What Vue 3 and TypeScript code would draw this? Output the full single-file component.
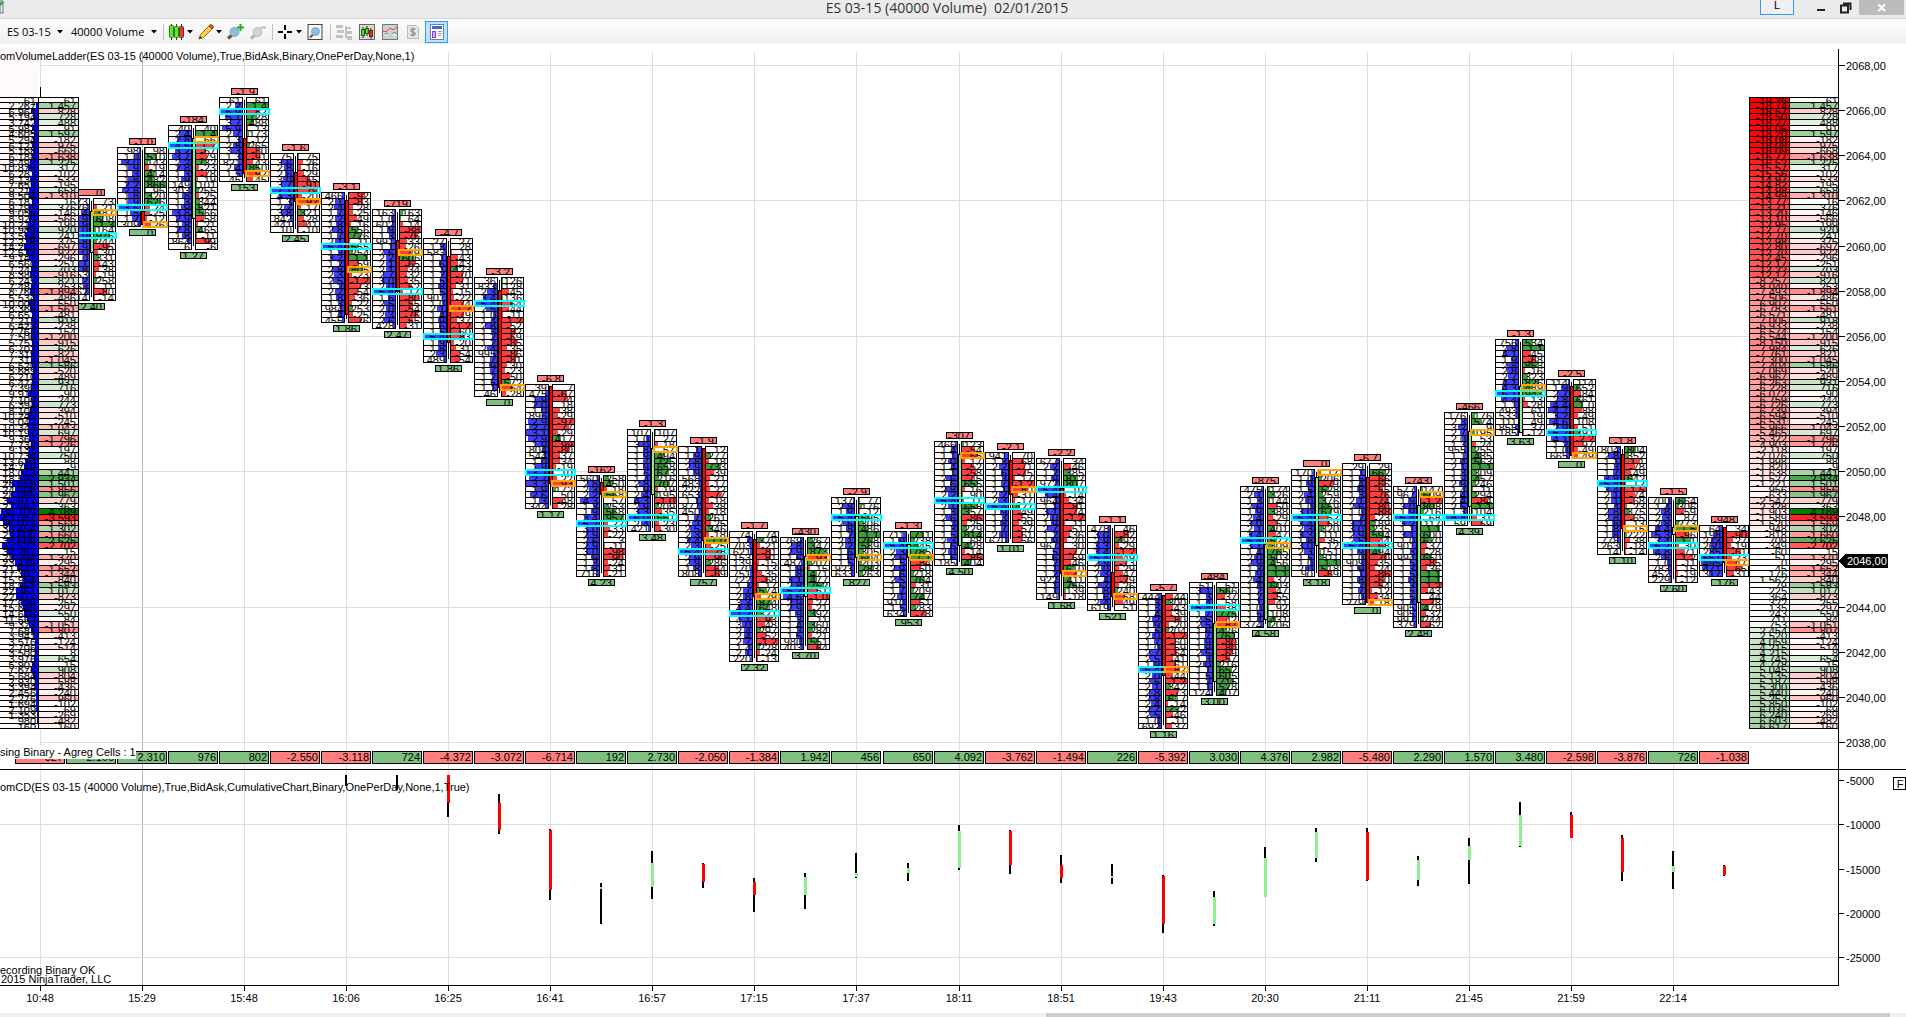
<script setup lang="ts">
import { computed, onBeforeUnmount, onMounted, ref } from 'vue'

interface Bar {
  i: number
  top: number
  end: number
  poc: number
  mark: number
  head: string
  foot: string
  body: [number, number]
  up: boolean
  vols: string[]
  deltas: string[]
}
type Candle = [number, number, number, number, number, number]

const ladderDelta = `61 1.457 -828 728 488 -91 1.597 -182 -975 -668 -1.638 1.225 317 -102 -533 -195 658 -1.310 16 376
-146 -566 -199 920 241 -375 -697 -922 -296 -251 703 -916 821 -253 -1.894 -486 -550 -1.561 -481 918
-238 154 -1.200 -915 626 -821 -1.045 1.586 -520 -489 931 716 -90 -244 773 -394 -510 -245 -1.043 697
-1.796 -1.726 197 750 88 -9 1.441 2.934 1.501 -1.856 1.967 -779 363 4.189 -3.593 -1.569 1.302 -1.660 2.625 -2.702
15 -1.370 -295 -1.652 -1.344 -840 1.583 1.017 -873 255 -297 550 84 -1.051 -1.807 -413 -124 -514 8 654
15 908 -804 -588 -436 -240 -960 -102 69 -269 -482 -160`.split(/\s+/)

const ladderCumulative = `-19.36 -18.74 -18.57 -18.50 -18.27 -18.05 -18.20 -18.08 -18.08 -18.09 -16.77 -16.52 -15.57 -15.56 -14.97 -14.82
-14.98 -14.99 -13.77 -13.71 -13.20 -13.10 -12.95 -12.77 -12.70 -12.98 -12.80 -12.70 -12.45 -12.17 -12.22 -12.17
-8.257 -8.040 -7.493 -7.506 -6.907 -6.783 -6.571 -7.005 -6.933 -6.574 -6.544 -8.150 -7.984 -7.761 -7.300 -7.404 -7.069 -6.967 -6.263 -6.228
-6.072 -6.759 -6.726 -6.739 -6.594 -6.531 -5.966 -5.465 -5.322 -4.903 -2.118 -2.076 -1.998 -1.820 -1.638 -1.527 -1.221 -956 -633 -2.547
-2.328 -1.903 -1.589 -1.520 -948 -818 -709 -349 -60 -51 0 45 176 1.562 79 225 364 322 135 243
711 753 2.454 2.520 4.059 4.215 4.215 4.745 4.778 5.045 5.135 5.187 5.300 5.440 5.253 5.850 6.036 6.240 6.603 6.617`.split(/\s+/)

const ladderVolume = `61 2.267 6.964 5.194 3.742 5.983 4.605 5.294 6.122 5.188 6.188 8.492 10.875 6.283 8.137 7.659 9.217 9.504 6.181 9.791
9.056 8.920 10.212 10.989 13.554 12.218 14.218 12.532 9.141 6.560 7.242 8.385 6.245 7.487 8.762 5.534 10.008 8.369 6.651 7.213
6.428 7.764 7.500 5.751 6.702 7.315 7.312 6.520 5.689 6.210 6.474 7.390 9.910 7.100 6.394 8.100 10.245 9.042 10.343 10.197
9.367 7.736 9.131 10.734 13.620 14.749 18.073 18.594 26.659 24.208 28.085 31.977 27.587 38.109 43.087 36.073 30.454 29.600 32.689 37.532
32.267 28.204 23.439 21.642 17.307 15.954 18.951 22.361 22.377 17.629 15.645 14.628 11.562 9.323 7.681 3.941 3.516 2.706 3.500 3.976
5.903 7.676 5.684 2.930 3.394 2.456 2.276 1.694 2.109 1.353 980 160`.split(/\s+/)

// index, first row, end row, point of control, marked row, header, footer, body rows, rising, volumes, deltas
const raw: [number, number, number, number, number, string, string, number, number, boolean, string, string][] = [
  [1, 18, 36, 24, 20, '0', '2.40', 20, 27, true, '73 376 1.4 3.9 2.9 3.0 3.0 2.8 1.9 2.0 1.0 2.1 1.8 153 1.2 768 762 14', '73 -21 387 608 1.3 164 976 244 -95 -30 331 -43 -38 -19 258 -11 -80 -14'],
  [2, 9, 23, 19, 22, '-1.0', '0', 20, 22, false, '98 1.0 3.0 1.9 1.3 1.8 2.2 2.8 1.8 1.9 3.6 1.5 1.2 309', '98 510 143 -19 414 432 866 95 320 626 -24 -25 -12 -26'],
  [3, 5, 27, 8, 7, '-184', '1.27', 7, 21, true, '40 2.4 2.8 4.5 3.2 3.7 2.2 2.8 1.3 1.9 149 303 1.8 1.3 1.9 3.8 2.9 1.8 2.8 1.8 864 6', '40 1.4 66 -1.2 -67 -79 732 -23 -78 -19 101 255 -25 344 521 566 -58 -21 465 -11 -99 -6'],
  [4, 0, 15, 2, 13, '-1.9', '153', 7, 13, false, '61 2.2 6.9 5.1 3.7 5.9 2.7 1.3 2.8 3.3 1.3 821 2.4 1.5 45', '61 1.4 -82 728 488 -13 173 -12 265 -80 -91 -43 850 -92 -45'],
  [5, 10, 24, 16, 18, '-1.6', '2.45', 13, 18, false, '75 3.6 2.8 2.6 3.0 3.7 7.1 4.3 1.3 2.7 3.8 842 441 10', '75 -26 -16 -29 -55 -91 -79 -20 -92 -17 321 -28 -41 -10'],
  [6, 17, 40, 26, 30, '-3.1', '1.86', 18, 38, false, '466', '-92'],
  [7, 20, 41, 34, 27, '-719', '2.47', 25, 34, false, '163 1.0 602', '163 64 -14'],
  [8, 25, 47, 42, 37, '-4.7', '1.86', 28, 43, false, '27 1.3 583', '27 28 -11'],
  [9, 32, 53, 36, 51, '-3.2', '0', 34, 51, false, '36 833 2.3', '126 128 -45'],
  [10, 51, 73, 66, 68, '-6.8', '1.17', 51, 68, false, '39 475 1.9 2.0 1.0 896 2.9 2.7 3.1 2.9 1.9 804 544 1.0 1.9 3.2 2.7 3.3 1.9 2.6 1.3 344', '7 -67 -74 18 -38 -29 -97 -77 -29 417 -99 -80 -37 -34 -19 -10 -22 -93 172 50 -48 -28'],
  [11, 67, 85, 75, 70, '-162', '4.23', 68, 70, false, '560 2.8 2.3 2.2 4.3 1.3 1.9 3.4 5.2 3.0 2.9 2.6 2.9 3.0 1.9 1.3 1.8 716', '258 450 -18 568 57 253 568 957 -22 -33 -22 3 -11 -98 -90 -24 -31 -21'],
  [12, 59, 77, 74, 62, '-1.3', '3.48', 62, 70, true, '107 1.0 3.0 1.8 1.9 1.7 1.9 1.6 1.4 2.8 1.9 2.4 4.3 2.9 3.3 6.0 2.4 421', '107 27 -18 57 494 725 658 673 216 707 -19 195 -1.0 209 -35 661 -23 -30'],
  [13, 62, 85, 80, 78, '-1.9', '757', 62, 78, false, '1.1 1.9 2.8 2.9 1.9 568 483 222 653 1.1 877 450 1.7 2.2 2.5 2.3 3.4 2.3 5.4 2.9 2.9 1.8 808', '12 277 -18 733 -39 -21 -17 -22 -77 -18 -38 -18 261 -25 346 -18 1.0 -25 -78 -90 286 -64 -69'],
  [14, 77, 100, 91, 88, '-1.7', '2.32', 78, 88, false, '74 1.7 703 621 153 139 170 751 722 1.7 2.7 2.8 3.3 4.4 7.2 4.1 3.0', '74 379 -21 -81 -81 -15 -13 -35 -68 -17 574 -29 874 648 321 -93 -48'],
  [15, 78, 98, 87, 81, '-430', '3.70', 81, 88, true, '769 2.8 2.9 1.6 487 1.9 1.8 3.1 2.8 5.2 4.6 2.9 2.9 1.9 1.3', '267 347 873 -93 207 -15 471 477 752 -51 -1.0 -27 -21 392 -11 360'],
  [16, 71, 85, 74, 81, '-2.9', '827', 74, 81, true, '137', '77'],
  [17, 77, 92, 79, 81, '-1.3', '953', 79, 81, true, '711', '711'],
  [18, 61, 83, 71, 63, '-307', '4.50', 63, 79, true, '466', '123'],
  [19, 63, 79, 72, 69, '-2.1', '1.01', 64, 70, false, '941', '70'],
  [20, 64, 89, 69, 84, '-2.2', '1.68', 69, 84, false, '677', '34'],
  [21, 76, 91, 81, 88, '-1.1', '521', 84, 88, false, '478', '46'],
  [22, 88, 112, 101, 101, '-5.7', '1.16', 88, 102, false, '444', '-44'],
  [23, 86, 106, 90, 93, '-484', '3.00', 93, 103, true, '51', '51'],
  [24, 69, 94, 78, 79, '-875', '4.58', 79, 92, true, '475', '174'],
  [25, 66, 85, 74, 66, '0', '3.18', 67, 79, true, '170', '-17'],
  [26, 65, 90, 79, 89, '-6.7', '0', 67, 89, false, '29', '29'],
  [27, 69, 94, 74, 70, '-743', '2.48', 72, 89, true, '577', '147'],
  [28, 56, 76, 74, 59, '-466', '4.39', 59, 72, true, '176 2.3 3.2 2.7 2.0 1.3 955 1.1 2.4 2.1 1.8 1.9 2.9 1.4 2.4 2.4 2.5 1.3 8.4 59', '176 574 9 195 53 -24 255 485 563 1.1 309 457 246 -11 294 -84 1.1 104 -31 -59'],
  [29, 43, 60, 52, 51, '-1.3', '3.63', 51, 59, true, '756 2.8 4.1 1.9 2.8 2.8 2.7 4.1 4.3 6.1 4.4 1.1 493 533 111 855 185', '534 1.1 -45 -68 853 -16 323 826 489 943 -13 -28 61 19 49 37 -12'],
  [30, 50, 64, 59, 63, '-2.5', '0', 51, 63, false, '114 1.9 2.7 2.8 4.4 4.7 3.2 4.6 2.9 5.2 4.1 1.2 1.0 665', '114 652 -84 661 1.0 -88 -49 108 -51 791 -2.2 -97 -49 -49'],
  [31, 62, 81, 68, 76, '-1.8', '1.10', 63, 76, false, '804 2.8 1.1 1.3 1.7 3.8 5.4 3.4 2.1 2.1 1.4 2.8 2.8 1.8 1.8 1.8 778 263 14', '804 352 -1.1 -78 -49 642 -12 -1.5 -74 -68 -23 375 -65 -13 -15 222 -38 -18 -14'],
  [32, 71, 86, 79, 76, '-1.5', '2.60', 76, 77, true, '700 1.4 2.8 2.3 2.8 4.4 5.3 3.4 6.2 4.8 2.8 1.0 783 452 229', '664 306 -59 87 273 1.5 -96 1.1 -30 -71 -1.2 -11 -15 -19 -12'],
  [33, 76, 85, 81, 82, '-948', '176', 76, 82, false, '64 198 273 260 285 551 495 471 317', '34 -90 -27 -19 -61 -23 -47 -65 -31'],
]

// rows without a recorded tick count take a value from a bell round the point of control
function noise(a: number, b: number) {
  const n = Math.sin(a * 91.7 + b * 47.3) * 9631.7
  return n - Math.floor(n)
}
function fillRows(i: number, top: number, end: number, poc: number, up: boolean, v: string[], d: string[]) {
  for (let k = v.length; k < end - top; k++) {
    const far = Math.abs(top + k - poc) / 12
    const size = k === end - top - 1 ? 40 + 700 * noise(i, k) : top + k === poc ? 5400 : 900 + 2600 * noise(i, k) * Math.exp(-far * far)
    v.push(size >= 1000 ? (Math.floor(size / 100) / 10).toFixed(1) : String(Math.round(size)))
  }
  for (let k = d.length; k < end - top; k++) {
    const rise = noise(i + 3, k) < (up ? 0.6 : 0.25)
    const m = noise(i + 7, k * 2)
    d.push(rise ? (m > 0.93 ? '1.1' : String(Math.round(30 + 850 * m))) : m > 0.93 ? '-1.2' : String(-Math.round(10 + 85 * m)))
  }
}

const bars: Bar[] = raw.map(([i, top, end, poc, mark, head, foot, b0, b1, up, v, d]) => {
  const vols = v.split(' ')
  const deltas = d.split(' ')
  fillRows(i, top, end, poc, up, vols, deltas)
  return { i, top, end, poc, mark, head, foot, body: [b0, b1], up, vols, deltas }
})

const barDeltas = ['-327', '2.166', '2.310', '976', '802', '-2.550', '-3.118', '724', '-4.372', '-3.072', '-6.714', '192', '2.730', '-2.050', '-1.384', '1.942', '456', '650', '4.092', '-3.762', '-1.494', '226', '-5.392', '3.030', '4.376', '2.982', '-5.480', '2.290', '1.570', '3.480', '-2.598', '-3.876', '726', '-1.038']
const times = ['10:48', '15:29', '15:48', '16:06', '16:25', '16:41', '16:57', '17:15', '17:37', '18:11', '18:51', '19:43', '20:30', '21:11', '21:45', '21:59', '22:14']

// index, high, low, body top, body bottom, direction; counted from the session's opening delta
const sessionOpen = -1200
const cumulative: Candle[] = [
  [6, -3200, -4450, 0, 0, 0], [7, -3200, -4900, 0, 0, 0], [8, -3200, -7950, -3200, -6370, -1],
  [9, -5350, -9880, -6370, -9430, -1], [10, -9320, -17350, -9430, -16200, -1], [11, -15400, -20100, -15900, -16100, 0],
  [12, -11860, -17200, -13200, -15900, 1], [13, -13150, -16000, -13280, -15300, -1], [14, -14850, -18700, -15300, -16780, -1],
  [15, -14300, -18350, -14750, -16780, 1], [16, -12030, -14850, -14300, -14750, 1], [17, -13150, -15200, -13730, -14300, 1],
  [18, -8860, -13950, -9550, -13730, 1], [19, -9430, -14400, -9550, -13400, -1], [20, -12250, -15420, -13400, -14850, -1],
  [21, -13280, -15530, -14650, -14850, 1], [22, -14500, -21060, -14650, -20040, -1], [23, -16320, -20260, -17000, -20040, 1],
  [24, -11350, -17000, -12600, -17000, 1], [25, -9210, -13050, -9660, -12600, 1], [26, -9210, -15200, -9660, -15080, -1],
  [27, -12370, -15760, -12820, -15080, 1], [28, -10340, -15530, -11240, -12820, 1], [29, -6270, -11350, -7740, -11240, 1],
  [30, -7400, -10340, -7740, -10340, -1], [31, -10000, -15200, -10340, -14180, -1], [32, -11800, -16100, -13500, -14180, 1],
  [33, -13390, -14630, -13500, -14520, -1],
]

const host = ref<HTMLElement | null>(null)
const W = ref(1906)
const H = ref(969)
let observer: ResizeObserver | undefined
function measure() {
  if (!host.value) return
  W.value = Math.max(600, host.value.clientWidth)
  H.value = Math.max(400, host.value.clientHeight)
}
onMounted(() => {
  measure()
  observer = new ResizeObserver(measure)
  if (host.value) observer.observe(host.value)
})
onBeforeUnmount(() => observer?.disconnect())

const axisX = computed(() => W.value - 68)
const bottomY = computed(() => H.value - 28)
const splitY = computed(() => Math.round(bottomY.value * 0.7705))
const tick = computed(() => (splitY.value - 48) / 120)

const priceY = (p: number) => Math.round(21 + (2068 - p) * 4 * tick.value)
const rowY = (r: number) => Math.round(21.5 + (5.5 + r) * tick.value)
const cx = (i: number) => Math.round(axisX.value - 114 - (33 - i) * 51.03)
const cdY = (v: number) => Math.round(splitY.value + 11 + ((-5000 - v) / 20000) * (bottomY.value - splitY.value - 39))
const cdBar = (v: number) => cdY(v + sessionOpen)

function num(s: string) {
  return s.includes('.') ? parseFloat(s) * 1000 : parseFloat(s)
}
function shade(s: string, max: number) {
  const n = num(s)
  const k = Math.round(255 - 255 * Math.min(1, Math.abs(n) / max))
  if (n < 0) return `rgb(255,${k},${k})`
  const g = Math.round(255 - 127 * Math.min(1, n / max))
  return `rgb(${k},${g},${k})`
}
function cumulativeShade(s: string) {
  const n = num(s)
  return n > 0 ? shade(s, 19360) : shade(s, Math.abs(n) > 12000 ? 18600 : 17000)
}
function volFill(b: Bar, k: number) {
  const max = Math.max(...b.vols.map(num))
  return Math.round(23 * Math.min(1, num(b.vols[k] ?? '0') / max))
}
function deltaSize(s: string) {
  if (s.includes('.')) return Math.abs(num(s))
  const n = num(s)
  return n < -9 ? -n * 10 : Math.abs(n)
}
function deltaFill(b: Bar, k: number) {
  const max = Math.max(...b.deltas.map(deltaSize))
  return Math.round(22 * Math.min(1, deltaSize(b.deltas[k] ?? '0') / max))
}
const rowsOf = (b: Bar) => Array.from({ length: b.end - b.top }, (_, k) => k)
const rowH = (r: number) => rowY(r + 1) - rowY(r)
const prices = Array.from({ length: 16 }, (_, k) => 2068 - 2 * k)
const gridPrices = [2068, 2062, 2056, 2050, 2044, 2038]
</script>

<template>
  <main class="window">
    <header class="titlebar">
      <svg class="app-icon" width="4" height="16" viewBox="0 0 4 16"><rect x="0" y="1" width="3" height="12" fill="#dfe6f2" stroke="#6d7a99" /><path d="M0 5L3 2" stroke="#2f9e2f" stroke-width="2" /></svg>
      <h1>ES 03-15 (40000 Volume)&nbsp; 02/01/2015</h1>
      <div class="win-buttons">
        <button class="link-btn" type="button">L</button>
        <button class="win-btn" type="button" aria-label="Minimize"><svg width="10" height="10"><rect x="1" y="6" width="8" height="2" fill="#222" /></svg></button>
        <button class="win-btn" type="button" aria-label="Restore"><svg width="12" height="12"><path d="M3 1.500H10.500V8M1 3.500H8V10.500H1Z" fill="none" stroke="#222" stroke-width="2" /></svg></button>
        <button class="close" type="button" aria-label="Close"><svg width="10" height="10"><path d="M1.500 1.500L8 8M8 1.500L1.500 8" stroke="#fff" stroke-width="2" /></svg></button>
      </div>
    </header>

    <nav class="toolbar">
      <label class="drop"><select aria-label="Instrument"><option>ES 03-15</option></select><svg width="7" height="4"><path d="M0 0H6L3 3.500Z" /></svg></label>
      <label class="drop second"><select aria-label="Interval"><option>40000 Volume</option></select><svg width="7" height="4"><path d="M0 0H6L3 3.500Z" /></svg></label>
      <i class="sep"></i>
      <button type="button" class="menu" aria-label="Chart style">
        <svg width="16" height="16"><path d="M2.500 0V16M7.500 0V16M12.500 0V16" stroke="#333" /><rect x="0.500" y="1.500" width="4" height="12" rx="1" fill="#5fe62d" stroke="#2a7a18" /><rect x="5.500" y="2.500" width="4" height="11" rx="1" fill="#5fe62d" stroke="#2a7a18" /><rect x="10.500" y="2.500" width="4" height="11" rx="1" fill="#e8402e" stroke="#8c1a10" /></svg>
        <svg class="arrow" width="7" height="4"><path d="M0 0H6L3 3.500Z" /></svg>
      </button>
      <button type="button" class="menu" aria-label="Drawing tools">
        <svg width="16" height="16"><path d="M1 15L2.500 10.500L11 2L14 5L5.500 13.500Z" fill="#ffd43b" stroke="#9a6b12" /><path d="M11 2L12.500 0.500Q15.500 1 15.500 3.500L14 5Z" fill="#e35b3c" stroke="#8c3320" /><path d="M1 15L2 12L4 14Z" fill="#333" /></svg>
        <svg class="arrow" width="7" height="4"><path d="M0 0H6L3 3.500Z" /></svg>
      </button>
      <button type="button" class="zoom" aria-label="Zoom in"><svg width="17" height="16"><path d="M1 14.500L5 11" stroke="#7a5230" stroke-width="3" /><circle cx="7.500" cy="8" r="4.500" fill="#86bfe8" stroke="#8aa3b8" /><path d="M13.500 0V7M10 3.500H17" stroke="#15b01a" stroke-width="2" /></svg></button>
      <button type="button" class="after" aria-label="Zoom out"><svg width="17" height="16"><path d="M1 14.500L5 11" stroke="#b5b5b5" stroke-width="3" /><circle cx="7.500" cy="8" r="4.500" fill="#d4d4d4" stroke="#bcbcbc" /><path d="M10.500 3.500H16" stroke="#bbb" stroke-width="2" /></svg></button>
      <i class="sep"></i>
      <button type="button" class="menu" aria-label="Crosshair">
        <svg width="16" height="16"><path d="M7 1V6M7 10V15M0 8H5M9 8H14" stroke="#000" stroke-width="2" /></svg>
        <svg class="arrow" width="7" height="4"><path d="M0 0H6L3 3.500Z" /></svg>
      </button>
      <button type="button" aria-label="Data box"><svg width="16" height="16"><rect x="1" y="0.500" width="14" height="15" fill="#f7f7f7" stroke="#444" /><path d="M3 13.500L6 10.500" stroke="#555" stroke-width="2" /><circle cx="8.500" cy="7.500" r="4" fill="#86bfe8" stroke="#8aa3b8" /></svg></button>
      <i class="sep wide"></i>
      <button type="button" aria-label="Chart trader"><svg width="16" height="16" fill="#c2c2c2"><rect x="0" y="1" width="7" height="3" /><rect x="1" y="6" width="7" height="3" /><rect x="0" y="11" width="7" height="3" /><rect x="9" y="2" width="2" height="12" /><rect x="11" y="3" width="4" height="2" /><rect x="11" y="7" width="5" height="3" /><rect x="11" y="12" width="5" height="4" /></svg></button>
      <button type="button" aria-label="Data series"><svg width="16" height="16"><rect x="0.500" y="0.500" width="15" height="15" fill="#d8d8d8" stroke="#666" /><path d="M4 3V14M8 2V12M12 4V15" stroke="#222" /><rect x="2.500" y="5.500" width="3" height="6" fill="#54d62c" stroke="#226614" /><rect x="6.500" y="4.500" width="3" height="5" fill="#54d62c" stroke="#226614" /><rect x="10.500" y="6.500" width="3" height="6" fill="#e8301c" stroke="#7d150b" /></svg></button>
      <button type="button" aria-label="Indicators"><svg width="16" height="16"><rect x="0.500" y="0.500" width="15" height="15" fill="#d0d0d0" stroke="#777" /><path d="M1 7L4 8L8 4L11 6L15 3" stroke="#d94a4a" fill="none" /><path d="M1 12L5 9L8 12L12 8L15 10" stroke="#4da685" fill="none" /><path d="M1 11H15" stroke="#f1f1f1" /></svg></button>
      <button type="button" class="tight" aria-label="Strategies"><svg width="16" height="16"><path d="M2.500 1.500H11L13.500 4V14.500H2.500Z" fill="#e6e6e6" stroke="#bcbcbc" /><path d="M10.500 5.500Q8 4 6 5.500Q5.500 7.500 8 8Q10.500 8.500 10 10.500Q8 12 5.500 10.500M8 3.500V12.500" fill="none" stroke="#999" stroke-width="1.500" /></svg></button>
      <button type="button" class="active" aria-label="Properties" aria-pressed="true"><svg width="16" height="16"><rect x="1.500" y="0.500" width="13" height="15" fill="#fff" stroke="#6b7fa3" /><rect x="3" y="2" width="10" height="3" fill="#2f6fd0" /><rect x="3.500" y="7.500" width="3" height="6" fill="#cdb0ff" stroke="#8544d8" /><path d="M9 7.500H13M9 9.500H13M9 11.500H12" stroke="#999" /></svg></button>
    </nav>

    <section ref="host" class="chart">
      <svg :width="W" :height="H" class="plot">
        <rect x="0" y="0" width="38" :height="rowY(0)" fill="#fffafa" />
        <g class="grid">
          <path v-for="(t, k) in times" :key="t" :class="{ session: k === 1 }" :d="`M${cx(k * 2) + 0.5} 8V${bottomY}`" />
          <path v-for="p in gridPrices" :key="p" :d="`M39 ${priceY(p) + 0.5}H${axisX}`" />
          <path :d="`M0 ${cdY(-10000) + 0.5}H${axisX}`" />
          <path :d="`M0 ${cdY(-25000) + 0.5}H${axisX}`" />
        </g>
        <path class="line" :d="`M${cx(0) + 0.5} ${rowY(0) - 10}V${rowY(0)}`" />

        <!-- footprint bars -->
        <g v-for="b in bars" :key="b.i">
          <svg :x="cx(b.i) - 13" :y="rowY(b.top) - 9" width="27" height="7">
            <rect class="box neg" x="0.500" y="0.500" width="26" height="6" /><text x="24" y="8" class="end">{{ b.head }}</text>
          </svg>
          <svg :x="cx(b.i) - 25" :y="rowY(b.top)" width="24" :height="rowY(b.end) - rowY(b.top) + 1">
            <g v-for="k in rowsOf(b)" :key="k">
              <rect x="0" :y="rowY(b.top + k) - rowY(b.top)" width="24" :height="rowH(b.top + k)" fill="#fffafa" />
              <rect :x="23 - volFill(b, k)" :y="rowY(b.top + k) - rowY(b.top)" :width="volFill(b, k)" :height="rowH(b.top + k)" fill="#3f3fff" />
              <rect class="cell" x="0.500" :y="rowY(b.top + k) - rowY(b.top) + 0.5" width="23" :height="rowH(b.top + k)" />
              <text x="22" :y="rowY(b.top + k) - rowY(b.top) + 8" class="end">{{ b.vols[k] }}</text>
            </g>
            <rect class="cell" x="0.500" y="0.500" width="23" :height="rowY(b.end) - rowY(b.top)" />
          </svg>
          <svg :x="cx(b.i) + 2" :y="rowY(b.top)" width="23" :height="rowY(b.end) - rowY(b.top) + 1">
            <g v-for="k in rowsOf(b)" :key="k">
              <rect x="0" :y="rowY(b.top + k) - rowY(b.top)" width="23" :height="rowH(b.top + k)" fill="#fffafa" />
              <rect x="0" :y="rowY(b.top + k) - rowY(b.top)" :width="deltaFill(b, k)" :height="rowH(b.top + k)" :fill="(b.deltas[k] ?? '').startsWith('-') ? '#ff3f3f' : '#3f9f3f'" />
              <rect class="cell" x="0.500" :y="rowY(b.top + k) - rowY(b.top) + 0.5" width="22" :height="rowH(b.top + k)" />
              <text x="21" :y="rowY(b.top + k) - rowY(b.top) + 8" class="end">{{ b.deltas[k] }}</text>
            </g>
            <rect class="cell" x="0.500" y="0.500" width="22" :height="rowY(b.end) - rowY(b.top)" />
          </svg>
          <path class="line" :d="`M${cx(b.i) + 0.5} ${rowY(b.top) + 3}V${rowY(b.end) - 3}`" />
          <rect :x="cx(b.i) - 1" :y="rowY(b.body[0]) + 2" width="4" :height="rowY(b.body[1]) - rowY(b.body[0]) + 2" />
          <rect :x="cx(b.i)" :y="rowY(b.body[0]) + 3" width="2" :height="rowY(b.body[1]) - rowY(b.body[0])" :fill="b.up ? '#90ee90' : '#ff0000'" />
          <rect class="poc" :x="cx(b.i) - 24" :y="rowY(b.poc) + 1" width="49" height="5" />
          <rect class="mark" :x="cx(b.i) + 2" :y="rowY(b.mark) + 1" width="23" height="5" />
          <svg :x="cx(b.i) - 13" :y="rowY(b.end) + 3" width="27" height="7">
            <rect class="box pos" x="0.500" y="0.500" width="26" height="6" /><text x="24" y="8" class="end">{{ b.foot }}</text>
          </svg>
        </g>

        <!-- volume profile at the left edge -->
        <svg x="0" :y="rowY(0)" width="79" :height="rowY(112) - rowY(0) + 1">
          <rect x="0" y="0" width="39" height="100%" fill="#fffafa" />
          <g v-for="(v, k) in ladderVolume" :key="k">
            <rect :x="38 - Math.min(38, Math.round(num(v) / 1040))" :y="rowY(k) - rowY(0)" :width="Math.min(38, Math.round(num(v) / 1040))" :height="rowH(k)" fill="#0000ff" />
            <path class="line" :d="`M0 ${rowY(k) - rowY(0) + 0.5}H39`" />
            <rect x="38.500" :y="rowY(k) - rowY(0) + 0.5" width="40" :height="rowH(k)" class="line" :style="{ fill: shade(ladderDelta[k], 4189) }" />
            <text x="36" :y="rowY(k) - rowY(0) + 8" class="end">{{ v }}</text>
            <text x="76" :y="rowY(k) - rowY(0) + 8" class="end">{{ ladderDelta[k] }}</text>
          </g>
          <rect class="cell" x="-1" y="0.500" width="79.500" :height="rowY(112) - rowY(0)" />
        </svg>

        <!-- cumulative profile at the right edge -->
        <svg :x="axisX - 89" :y="rowY(0)" width="90" :height="rowY(112) - rowY(0) + 1">
          <g v-for="(v, k) in ladderCumulative" :key="k">
            <rect x="0.500" :y="rowY(k) - rowY(0) + 0.5" width="40" :height="rowH(k)" class="line" :style="{ fill: cumulativeShade(v) }" />
            <rect x="40.500" :y="rowY(k) - rowY(0) + 0.5" width="49" :height="rowH(k)" class="line" :style="{ fill: shade(ladderDelta[k], 4189) }" />
            <text x="38" :y="rowY(k) - rowY(0) + 8" class="end">{{ v }}</text>
            <text x="89" :y="rowY(k) - rowY(0) + 8" class="end">{{ ladderDelta[k] }}</text>
          </g>
          <rect class="cell" x="0.500" y="0.500" width="89" :height="rowY(112) - rowY(0)" />
        </svg>

        <!-- delta per bar -->
        <g v-for="(d, k) in barDeltas" :key="'d' + k">
          <rect class="box" :class="d.startsWith('-') ? 'neg' : 'pos'" :x="cx(k) - 24.5" :y="splitY - 17.5" width="49" height="12" />
          <text :x="cx(k) + 23" :y="splitY - 8" class="end">{{ d }}</text>
        </g>
        <rect x="0" :y="splitY - 24" width="136" height="14" fill="#fff" />
        <text x="0" :y="splitY - 13">sing Binary - Agreg Cells : 1</text>
        <text x="0" y="16">omVolumeLadder(ES 03-15 (40000 Volume),True,BidAsk,Binary,OnePerDay,None,1)</text>

        <!-- cumulative delta candles -->
        <g v-for="c in cumulative" :key="'c' + c[0]">
          <rect :x="cx(c[0]) - 1" :y="cdBar(c[1])" width="2" :height="cdBar(c[2]) - cdBar(c[1])" />
          <rect v-if="c[5]" :x="cx(c[0]) - 1" :y="cdBar(c[3])" width="3" :height="cdBar(c[4]) - cdBar(c[3])" :fill="c[5] > 0 ? '#90ee90' : '#ff0000'" />
          <rect v-else-if="c[3]" :x="cx(c[0]) - 1" :y="cdBar(c[3])" width="3" height="2" fill="#90ee90" />
        </g>
        <text x="0" :y="splitY + 22">omCD(ES 03-15 (40000 Volume),True,BidAsk,CumulativeChart,Binary,OnePerDay,None,1,True)</text>
        <text x="0" :y="bottomY - 11">ecording Binary OK</text>
        <text x="1" :y="bottomY - 2">2015 NinjaTrader, LLC</text>

        <!-- axes -->
        <path class="line" :d="`M${axisX + 0.5} 5V${bottomY + 0.5}H0M0 ${splitY + 0.5}H${W}`" />
        <g v-for="p in prices" :key="'p' + p">
          <path class="line" :d="`M${axisX} ${priceY(p) + 0.5}h7`" />
          <text v-if="p !== 2046" :x="axisX + 8" :y="priceY(p) + 5">{{ p }},00</text>
        </g>
        <g v-for="k in 5" :key="'a' + k">
          <path class="line" :d="`M${axisX} ${cdY(-5000 * k) + 0.5}h6`" />
          <text :x="axisX + 8" :y="cdY(-5000 * k) + 5">{{ -5000 * k }}</text>
        </g>
        <path :d="`M${axisX + 1} ${priceY(2046)}l6 -7h43v14h-43z`" />
        <text :x="axisX + 9" :y="priceY(2046) + 4" fill="#fff">2046,00</text>
        <g v-for="(t, k) in times" :key="'t' + t">
          <path class="line" :d="`M${cx(k * 2) + 0.5} ${bottomY}v6`" />
          <text :x="cx(k * 2)" :y="bottomY + 17" class="mid">{{ t }}</text>
        </g>
        <rect :x="W - 12.5" :y="splitY + 8.5" width="12" height="12" class="line" />
        <text :x="W - 6" :y="splitY + 19" class="mid">F</text>
      </svg>
    </section>
    <div class="scroll"><i></i><b></b><i class="rest"></i></div>
  </main>
</template>

<style>
html, body { margin: 0; background: #fff; overflow: hidden; }
</style>

<style scoped>
.window { display: flex; flex-direction: column; height: 100vh; background: #fff; font-family: "Open Sans", "Noto Sans", sans-serif; color: #000; }
.titlebar { display: flex; position: relative; height: 18px; background: #ebebeb; border-bottom: 1px solid #d4d4d4; justify-content: center; }
.app-icon { position: absolute; left: 0; top: 0; }
h1 { margin: 0; font-size: 14px; line-height: 16px; font-weight: 400; color: #333; padding-right: 12px; }
.win-buttons { position: absolute; right: 2px; top: 0; display: flex; height: 15px; }
button { font: inherit; border: 0; background: none; padding: 0; margin: 0; }
.link-btn { width: 34px; border: 1px solid #3399ff; border-top: 0; background: #f0f0f0; font-size: 11px; line-height: 10px; padding-bottom: 4px; margin-right: 14px; font-family: "Liberation Sans", sans-serif; }
.win-btn { width: 25px; display: grid; place-items: center; }
.close { width: 45px; background: #bcbcbc; display: grid; place-items: center; margin-left: 1px; }
.toolbar { display: flex; align-items: center; height: 25px; padding-left: 7px; background: linear-gradient(#fdfdfd, #f0f0f0); }
.drop { display: flex; align-items: center; gap: 6px; }
.drop.second { margin-left: 7px; }
select { appearance: none; border: 0; background: none; padding: 0; margin: 0; font: 11px/16px "Open Sans", sans-serif; color: #000; }
.sep { width: 1px; height: 16px; background: #c0c0c0; margin: 0 5px; }
.sep.wide { margin-left: 0; }
.toolbar button { display: flex; align-items: center; height: 20px; margin-right: 7px; }
.toolbar .menu { gap: 2px; margin-right: 4px; }
.toolbar .zoom { margin-right: 6px; }
.toolbar .after { margin-right: 0; }
.toolbar .tight { margin-right: 4px; }
.toolbar button.active { width: 23px; height: 22px; border: 1px solid #3399ff; background: #c4e0fb; justify-content: center; box-sizing: border-box; }
.chart { flex: 1; min-height: 0; min-width: 0; overflow: hidden; }
.plot { display: block; font: 11px "Liberation Sans", Arial, sans-serif; }
.plot rect, .plot path { shape-rendering: crispEdges; }
.grid path { stroke: #dedede; fill: none; }
.grid path.session { stroke: #b4b4b4; }
.line { stroke: #000; fill: none; }
rect.line { fill: #fff; }
.cell { stroke: #000; fill: none; }
.box { stroke: #000; }
.neg { fill: #ff7f7f; }
.pos { fill: #7fbf7f; }
.poc { fill: none; stroke: #00ffff; stroke-width: 2px; }
.mark { fill: none; stroke: #ffa500; stroke-width: 2px; }
.end { text-anchor: end; }
.mid { text-anchor: middle; }
.scroll { display: flex; height: 4px; background: #f0f0f0; }
.scroll i { flex: 1046; }
.scroll b { flex: 844; background: #cdcdcd; }
.scroll i.rest { flex: 16; }
</style>
